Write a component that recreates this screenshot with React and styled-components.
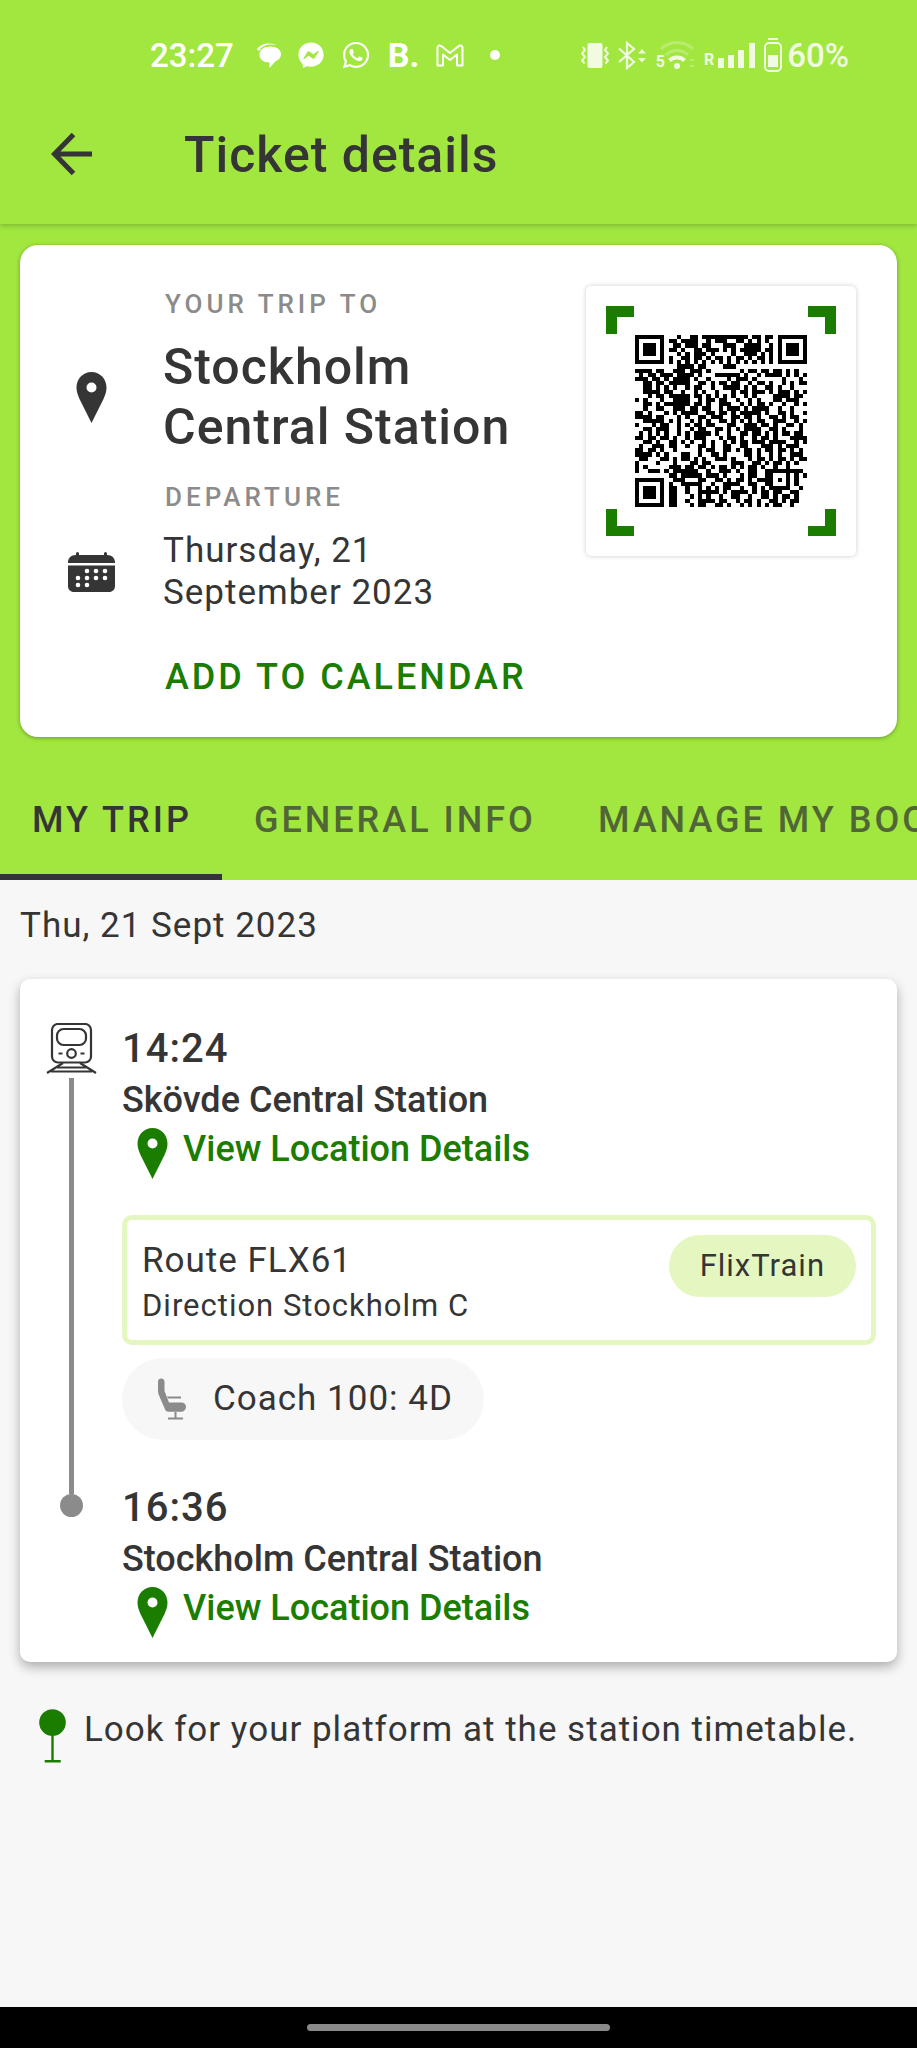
import React from "react";
import styled, { createGlobalStyle, css } from "styled-components";
import { FaFacebookMessenger, FaWhatsapp } from "react-icons/fa";

const color = {
  lime: "#a2e740",
  limeSoft: "#e5f7c0",
  green: "#1a7d00",
  ink: "#353535",
  grey: "#8b8b8b",
  page: "#f7f7f7",
};

const Global = createGlobalStyle`
  * { box-sizing: border-box; }
  body {
    margin: 0;
    background: ${color.page};
    color: ${color.ink};
    font-family: Roboto, "Liberation Sans", sans-serif;
    font-size: 35px;
    letter-spacing: 1px;
  }
  h1, h2, p { margin: 0; font-weight: inherit; font-size: inherit; }
  svg { display: block; flex: none; }
`;

const buttonReset = css`
  margin: 0;
  padding: 0;
  border: 0;
  background: none;
  font: inherit;
  color: inherit;
  letter-spacing: inherit;
  cursor: pointer;
`;

const Screen = styled.div`
  display: flex;
  flex-direction: column;
  min-height: 100vh;
`;

const TopArea = styled.header`
  position: relative;
  background: ${color.lime};
  box-shadow: 0 2px 5px rgba(0, 0, 0, 0.2);
`;

const StatusBar = styled.div`
  display: flex;
  align-items: center;
  justify-content: space-between;
  height: 86px;
  padding: 24px 68px 0 150px;
  color: #fff;
  font-size: 33px;
  font-weight: 500;
  letter-spacing: 0;
`;

const StatusGroup = styled.div`
  display: flex;
  align-items: center;
  gap: ${(p) => p.$gap}px;
  opacity: ${(p) => (p.$dim ? 0.85 : 1)};
`;

const Clock = styled.span`
  margin-right: 6px;
`;

const BookingMark = styled.span`
  font-size: 34px;
  line-height: 34px;
  font-weight: 700;
`;

const SmallMark = styled.span`
  align-self: flex-end;
  font-size: 16px;
  line-height: 16px;
  font-weight: 700;
`;

const SignalGroup = styled.span`
  display: flex;
  align-items: center;
  gap: ${(p) => (p.$tight ? 0 : 4)}px;
  ${(p) => p.$tight && "svg { margin-left: -5px; }"}
`;

const Battery = styled.span`
  display: flex;
  align-items: center;
  gap: 5px;
`;

const AppBar = styled.div`
  display: flex;
  align-items: center;
  height: 138px;
  padding: 0 50px;
`;

const BackButton = styled.button`
  ${buttonReset}
  width: 134px;
`;

const Title = styled.h1`
  font-size: 50px;
  line-height: 60px;
  font-weight: 500;
`;

const Hero = styled.section`
  padding: 21px 20px 23px;
  background: ${color.lime};
`;

const TripCard = styled.div`
  display: flex;
  align-items: flex-start;
  padding: 41px 41px 40px 0;
  background: #fff;
  border-radius: 18px;
  box-shadow: 0 1px 4px rgba(0, 0, 0, 0.35);
`;

const TripFacts = styled.div`
  flex: 1;
  display: grid;
  grid-template-columns: 143px 1fr;
  justify-items: start;
  padding-right: 40px;
`;

const IconCell = styled.div`
  align-self: center;
  justify-self: center;
`;

const Label = styled.p`
  grid-column: 2;
  padding-left: 2px;
  margin-top: ${(p) => (p.$spaced ? 22 : 0)}px;
  margin-bottom: 15px;
  color: ${color.grey};
  font-size: 26px;
  line-height: 36px;
  font-weight: 500;
  letter-spacing: 4px;
`;

const Destination = styled.h2`
  font-size: 50px;
  line-height: 60px;
  font-weight: 500;
`;

const DepartureDate = styled.p`
  line-height: 42px;
`;

const CalendarButton = styled.button`
  ${buttonReset}
  grid-column: 2;
  margin-top: 43px;
  padding-left: 2px;
  color: ${color.green};
  font-size: 36px;
  line-height: 40px;
  font-weight: 500;
  letter-spacing: 3px;
`;

const QrButton = styled.button`
  ${buttonReset}
  flex: none;
  border-radius: 5px;
  background: #fff;
  box-shadow: 0 0 5px rgba(0, 0, 0, 0.2);
`;

const TabList = styled.nav`
  display: flex;
  overflow: hidden;
  background: ${color.lime};
`;

const Tab = styled.button`
  ${buttonReset}
  flex: none;
  height: 120px;
  padding: 0 30px 0 32px;
  white-space: nowrap;
  font-size: 36px;
  font-weight: 500;
  letter-spacing: 3px;
  color: ${(p) => (p.$active ? color.ink : "#506636")};
  box-shadow: ${(p) => (p.$active ? `inset 0 -6px ${color.ink}` : "none")};
`;

const Main = styled.main`
  flex: 1;
  padding: 25px 20px;
`;

const DayHeading = styled.h2`
  margin-bottom: 32px;
  line-height: 42px;
`;

const JourneyCard = styled.section`
  padding: 44px 21px 24px 0;
  background: #fff;
  border-radius: 10px;
  box-shadow: 0 5px 12px rgba(0, 0, 0, 0.3);
`;

const Segment = styled.div`
  display: grid;
  grid-template-columns: 102px 1fr;
`;

const Rail = styled.div`
  display: flex;
  flex-direction: column;
  align-items: center;
`;

const RailLine = styled.span`
  width: 5px;
  background: ${color.grey};
  ${(p) => (p.$short ? "height: 12px;" : "flex: 1; margin-top: 4px;")}
`;

const RailDot = styled.span`
  width: 23px;
  height: 23px;
  border-radius: 50%;
  background: ${color.grey};
`;

const Time = styled.p`
  font-size: 40px;
  line-height: 52px;
  font-weight: 500;
`;

const Station = styled.p`
  font-size: 36px;
  line-height: 50px;
  font-weight: 500;
  letter-spacing: 0;
`;

const LocationLink = styled.a`
  display: flex;
  align-items: flex-start;
  gap: 15px;
  padding-left: 15px;
  color: ${color.green};
  font-size: 36px;
  line-height: 48px;
  font-weight: 500;
  letter-spacing: 0;
  text-decoration: none;

  svg { margin-top: 3px; }
`;

const RouteBox = styled.div`
  display: flex;
  align-items: flex-start;
  justify-content: space-between;
  margin-top: 36px;
  padding: 15px;
  border: 5px solid ${color.limeSoft};
  border-radius: 10px;
`;

const RouteName = styled.p`
  line-height: 52px;
`;

const RouteDirection = styled.p`
  font-size: 31px;
  line-height: 38px;
`;

const Chip = styled.span`
  padding: 0 31px;
  border-radius: 31px;
  background: ${color.limeSoft};
  font-size: 31px;
  line-height: 62px;
`;

const SeatPill = styled.div`
  display: inline-flex;
  align-items: center;
  gap: 27px;
  margin: 13px 0 42px;
  padding: 0 31px 0 35px;
  border-radius: 41px;
  background: ${color.page};
  line-height: 82px;
  vertical-align: top;
`;

const Notice = styled.p`
  display: flex;
  gap: 18px;
  margin-top: 44px;
  padding-left: 19px;
  line-height: 48px;

  svg { margin-top: 3px; }
`;

const GestureBar = styled.footer`
  display: flex;
  align-items: center;
  justify-content: center;
  height: 41px;
  background: #000;
`;

const GestureHandle = styled.span`
  width: 33%;
  height: 7px;
  border-radius: 4px;
  background: #8a8a8a;
`;

function PinIcon({ fill = color.green }) {
  return (
    <svg width="31" height="51" viewBox="0 0 31 51" aria-hidden="true">
      <path
        fill={fill}
        fillRule="evenodd"
        d="M15.500 0C7 0 .5 7 .5 15.500c0 4 1 7 3 11.500L15.500 51l12-24c2-4.500 3-7.500 3-11.500C30.500 7 24 0 15.500 0zm0 10.500a5 5 0 1 1 0 10 5 5 0 0 1 0-10z"
      />
    </svg>
  );
}

const calendarDots = [
  [19, 19], [28, 19], [37, 19],
  [10, 26], [19, 26], [28, 26], [37, 26],
  [10, 33], [19, 33],
];

function CalendarIcon() {
  return (
    <svg width="47" height="40" viewBox="0 0 47 40" aria-hidden="true">
      <path fill={color.ink} d="M8 3V1.500a1.500 1.500 0 0 1 3 0V3h25V1.500a1.500 1.500 0 0 1 3 0V3c5 0 8 3 8 7.500V11H0v-.5C0 6 3 3 8 3zM0 13.500h47V34c0 3.500-2.500 6-6 6H6c-3.500 0-6-2.500-6-6z" />
      {calendarDots.map(([x, y]) => (
        <circle key={`${x}-${y}`} cx={x} cy={y} r="2.300" fill="#fff" />
      ))}
    </svg>
  );
}

function BackIcon() {
  return (
    <svg width="46" height="46" viewBox="0 0 46 46" fill="none" stroke={color.ink} strokeWidth="5" aria-hidden="true">
      <path d="M42 22H5M23.500 2.500 4.500 22l19 19.500" />
    </svg>
  );
}

function TrainIcon() {
  return (
    <svg width="51" height="51" viewBox="0 0 51 51" fill="none" stroke={color.ink} strokeWidth="2.200" aria-hidden="true">
      <rect x="6" y="1" width="39" height="38.500" rx="6" />
      <rect x="11" y="6" width="29" height="16" rx="6.500" />
      <circle cx="25.500" cy="30.500" r="4.300" />
      <path d="M12.500 30.500h4M34.500 30.500h4M17 40 1 50M34 40l16 10M11 44.500h29M5 48.500h41" />
    </svg>
  );
}

function SeatIcon() {
  return (
    <svg width="29" height="42" viewBox="0 0 29 42" fill={color.grey} aria-hidden="true">
      <path d="M1 3.500C1 1.500 2.500.5 4.200.5S7.500 1.500 7.500 3.500V13l4.500 11.500h12.500c2.500 0 4.500 1.800 4.500 4.300s-2 5-4.500 5H11.500c-2 0-3-1-3.600-2.800L1.600 16.500C1.200 15 1 14 1 12.500z" />
      <path d="M10 18.500h14v2H11zM17.500 34h2v5.500h6.500v2H11v-2h6.500z" />
    </svg>
  );
}

function PlatformIcon() {
  return (
    <svg width="27" height="54" viewBox="0 0 27 54" fill={color.green} aria-hidden="true">
      <circle cx="13.500" cy="13.500" r="13.300" />
      <path d="M12.300 26h2.400v25h7v2.600h-16V51h6.600z" />
    </svg>
  );
}

function ChatIcon() {
  return (
    <svg width="24" height="26" viewBox="0 0 24 26" fill="#fff" aria-hidden="true">
      <path d="M13 4.500C19.500 4.500 24 7.500 24 12c0 3.500-2 6-5.500 7.200L12.500 26v-5.500C6 20.500 2.500 17 2.500 12.500c0-4.500 4.500-8 10.500-8z" />
      <path d="M0 7C2.500 3.500 7 1.500 12 1.500c3.500 0 6 .7 8 2-2.500-1-5-1.300-8-1C7.500 3 4.500 5 2 9z" />
    </svg>
  );
}

function MailIcon() {
  return (
    <svg width="28" height="23" viewBox="0 0 28 23" fill="none" stroke="#fff" strokeWidth="2" strokeLinejoin="round" aria-hidden="true">
      <path d="M1.500 21.500V3.500C1.500 1.500 4 1 5.500 2.200L14 9l8.500-6.800c1.500-1.200 4-.7 4 1.300v18H21V10.500l-7 5.500-7-5.500v11z" />
    </svg>
  );
}

function DotIcon() {
  return (
    <svg width="19" height="10" viewBox="0 0 19 10" aria-hidden="true">
      <circle cx="14" cy="5" r="5" fill="#fff" />
    </svg>
  );
}

function VibrateIcon() {
  return (
    <svg width="28" height="26" viewBox="0 0 28 26" fill="none" stroke="#fff" strokeWidth="2" aria-hidden="true">
      <rect x="6.500" y="1" width="15" height="25" rx="2" fill="#fff" stroke="none" />
      <path d="M2 5l2 3-3 3.500 3 3.500-3 3.500 2.500 3M26 5l-2 3 3 3.500-3 3.500 3 3.500-2.500 3" />
    </svg>
  );
}

function BluetoothIcon() {
  return (
    <svg width="29" height="29" viewBox="0 0 29 29" fill="none" stroke="#fff" strokeWidth="2.200" aria-hidden="true">
      <path d="M1 7.500 16 21l-7 6V2l7 6L1 21" />
      <path d="M24 8l4 4.500h-8zM24 21.500l4-4.500h-8z" fill="#fff" stroke="none" />
    </svg>
  );
}

function WifiIcon() {
  return (
    <svg width="35" height="30" viewBox="0 0 35 30" fill="none" stroke="#fff" strokeWidth="3" aria-hidden="true">
      <path d="M1 9a23 23 0 0 1 32 0M6 15a16 16 0 0 1 22 0" opacity=".3" />
      <path d="M9.500 20.500a11 11 0 0 1 15 0" strokeWidth="4" />
      <circle cx="17" cy="26" r="3" fill="#fff" stroke="none" />
      <path d="M29 21l3-3 3 3zM29 25l3 3 3-3z" fill="#fff" stroke="none" opacity=".3" />
    </svg>
  );
}

function SignalIcon() {
  return (
    <svg width="37" height="26" viewBox="0 0 37 26" fill="#fff" aria-hidden="true">
      <path d="M0 16h6v10H0zM10 13h6v13h-6zM20 8h6v18h-6zM31 1h6v25h-6z" />
    </svg>
  );
}

function BatteryIcon() {
  return (
    <svg width="18" height="34" viewBox="0 0 18 34" aria-hidden="true">
      <path d="M4 0h10v2H4zM4 17h10v12H4z" fill="#fff" />
      <rect x="1" y="5" width="16" height="28" rx="4" fill="none" stroke="#fff" strokeWidth="2" />
    </svg>
  );
}

const qrRows = [
  "#######...#..##.###########.##.##.#######",
  "#.....#.##.####..#.###..##.#.#.#..#.....#",
  "#.###.#..##.###.##...###..####..#.#.###.#",
  "#.###.#.##.#..##.###.#.#.#####.##.#.###.#",
  "#.###.#...#.#.###.#....#..###.#.#.#.###.#",
  "#.....#.#..##.##.#.##.#.##.#.##.#.#.....#",
  "#######.#.#.#.#.#.#.#.#.#.#.#.#.#.#######",
  "..........####.##....###.................",
  "####.##..###.###.#.......#.##.##.##.#.#..",
  ".#.##.###.####.#...######.#..#.####.#.#.#",
  "###.##.#.####.#..#....#.###.#......#...#.",
  "..##.##.#####..##.#.##.##..#.##.#..#.#.##",
  "..##.#.#.#..#.##..#..####.#.#..##.#..#...",
  "..####.##..#..#.#..#...#.##.###.#.###.#.#",
  "...#.##.#####.##.#.#.#.#..#.#....####.##.",
  "#.#...#..####..#.##.##..#..#.#...##.###..",
  "..##.#.######.##.#..###..#.#.##.#..#..#.#",
  "..#..##..###.##.##..#.###.#.####..#..#...",
  "##.#...#.#.####..##.##.#.#####.#..##.#..#",
  "####.##...#.#..##.###..##.##.#..##.#.##..",
  "..#####.#.#..#.#.#..##.#.#.#.##..###..#.#",
  "#...#.##..#.#.##.##...##..###.##.#..##.#.",
  "..##.###..#..#.##..##.#.#.####..##.#...#.",
  ".#.#.#.#..#.#.####.#..#..##.##.#.#.##.##.",
  "##.##.##.#..#.###...#.##.#..#.##.#...####",
  "..##.#..##.#.#..#.#..#.#.##.###.####..#.#",
  ".#..###.##..#..##.#..##..##...###.#.###..",
  "##.##.#..#.....#.##..##.#.##.#.##.##.#.#.",
  "####.#.#...##..#..##.#....##.#..#.#..###.",
  ".##...##.#.##.#.#..###.#...#.##.#.##.#.##",
  "#....#...#...##.##.....###..##.#.##.#.#..",
  "#.#.....###.##.##.#.##.#.#.##.#..#..#....",
  "#..###.#.######..#..###.#..##..#########.",
  "........##.#####.###.#...#.##..##...#.#.#",
  "#######..###...##..##.#.##.#.####.#.#.#..",
  "#.....#.#..#####..#..####..##..##...#.#..",
  "#.###.#.##..#..#.#.#.##..#..#.#.#####..#.",
  "#.###.#.##..#..#####.#.####.#.##.##..##..",
  "#.###.#.##...#.#.#..#..##..#..##.#.##.#..",
  "#.....#.##..#..####.##..#.##.#..##.#.##..",
  "#######.##...#.##..##.#..#.#.#.#.##..#...",
];

const qrPath = qrRows
  .flatMap((row, y) => [...row].map((cell, x) => (cell === "#" ? `M${x} ${y}h1v1h-1z` : "")))
  .join("");

function QrCode() {
  return (
    <svg width="270" height="270" viewBox="0 0 270 270" role="img" aria-label="Ticket QR code">
      <path fill={color.green} d="M20 20h28v11H31v17H20zM222 20h28v28h-11V31h-17zM20 223h11v17h17v10H20zM239 223h11v27h-28v-10h17z" />
      <svg x="49" y="49" width="172" height="172" viewBox="0 0 41 41" shapeRendering="crispEdges">
        <path d={qrPath} />
      </svg>
    </svg>
  );
}

function Stop({ time, station }) {
  return (
    <>
      <Time>{time}</Time>
      <Station>{station}</Station>
      <LocationLink href="#location">
        <PinIcon />
        View Location Details
      </LocationLink>
    </>
  );
}

export default function App() {
  return (
    <Screen>
      <Global />
      <TopArea>
        <StatusBar>
          <StatusGroup $gap={17}>
            <Clock>23:27</Clock>
            <ChatIcon />
            <FaFacebookMessenger size={26} />
            <FaWhatsapp size={30} />
            <BookingMark>B.</BookingMark>
            <MailIcon />
            <DotIcon />
          </StatusGroup>
          <StatusGroup $gap={9} $dim>
            <VibrateIcon />
            <BluetoothIcon />
            <SignalGroup $tight>
              <SmallMark>5</SmallMark>
              <WifiIcon />
            </SignalGroup>
            <SignalGroup>
              <SmallMark>R</SmallMark>
              <SignalIcon />
            </SignalGroup>
            <Battery>
              <BatteryIcon />
              60%
            </Battery>
          </StatusGroup>
        </StatusBar>
        <AppBar>
          <BackButton aria-label="Back">
            <BackIcon />
          </BackButton>
          <Title>Ticket details</Title>
        </AppBar>
      </TopArea>

      <Hero>
        <TripCard>
          <TripFacts>
            <Label>YOUR TRIP TO</Label>
            <IconCell>
              <PinIcon fill={color.ink} />
            </IconCell>
            <Destination>Stockholm Central Station</Destination>
            <Label $spaced>DEPARTURE</Label>
            <IconCell>
              <CalendarIcon />
            </IconCell>
            <DepartureDate>Thursday, 21 September 2023</DepartureDate>
            <CalendarButton>ADD TO CALENDAR</CalendarButton>
          </TripFacts>
          <QrButton aria-label="Enlarge QR code">
            <QrCode />
          </QrButton>
        </TripCard>
      </Hero>

      <TabList>
        <Tab $active aria-current="page">MY TRIP</Tab>
        <Tab>GENERAL INFO</Tab>
        <Tab>MANAGE MY BOOKING</Tab>
      </TabList>

      <Main>
        <DayHeading>Thu, 21 Sept 2023</DayHeading>
        <JourneyCard>
          <Segment>
            <Rail>
              <TrainIcon />
              <RailLine />
            </Rail>
            <div>
              <Stop time="14:24" station="Skövde Central Station" />
              <RouteBox>
                <div>
                  <RouteName>Route FLX61</RouteName>
                  <RouteDirection>Direction Stockholm C</RouteDirection>
                </div>
                <Chip>FlixTrain</Chip>
              </RouteBox>
              <SeatPill>
                <SeatIcon />
                Coach 100: 4D
              </SeatPill>
            </div>
          </Segment>
          <Segment>
            <Rail>
              <RailLine $short />
              <RailDot />
            </Rail>
            <div>
              <Stop time="16:36" station="Stockholm Central Station" />
            </div>
          </Segment>
        </JourneyCard>
        <Notice>
          <PlatformIcon />
          Look for your platform at the station timetable.
        </Notice>
      </Main>

      <GestureBar>
        <GestureHandle />
      </GestureBar>
    </Screen>
  );
}
